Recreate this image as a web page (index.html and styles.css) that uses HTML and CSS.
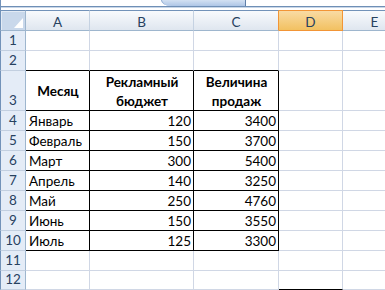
FILE: index.html
```html
<!DOCTYPE html>
<html lang="ru">
<head>
    <meta charset="UTF-8">
    <meta name="viewport" content="width=device-width, initial-scale=1.0">
    <title>Реклама и продажи</title>
    <link rel="stylesheet" href="styles.css">
</head>
<body>

<div class="sheet">
    <div class="topbar">
        <div class="namebox"><span>ООО</span></div>
        <div class="tab"></div>
    </div>

    <div class="grid">
        <div class="corner"></div>
        <div class="ch">A</div>
        <div class="ch">B</div>
        <div class="ch pre-sel">C</div>
        <div class="ch sel">D</div>
        <div class="ch">E</div>

        <div class="rh">1</div>
        <div class="c"></div><div class="c"></div><div class="c"></div><div class="c"></div><div class="c"></div>

        <div class="rh">2</div>
        <div class="c bt"></div><div class="c bt"></div><div class="c bt"></div><div class="c"></div><div class="c"></div>

        <div class="rh">3</div>
        <div class="c b th">Месяц</div>
        <div class="c b th">Рекламный бюджет</div>
        <div class="c b th">Величина продаж</div>
        <div class="c"></div><div class="c"></div>

        <div class="rh">4</div>
        <div class="c b">Январь</div><div class="c b num">120</div><div class="c b num">3400</div>
        <div class="c"></div><div class="c"></div>

        <div class="rh">5</div>
        <div class="c b">Февраль</div><div class="c b num">150</div><div class="c b num">3700</div>
        <div class="c"></div><div class="c"></div>

        <div class="rh">6</div>
        <div class="c b">Март</div><div class="c b num">300</div><div class="c b num">5400</div>
        <div class="c"></div><div class="c"></div>

        <div class="rh">7</div>
        <div class="c b">Апрель</div><div class="c b num">140</div><div class="c b num">3250</div>
        <div class="c"></div><div class="c"></div>

        <div class="rh">8</div>
        <div class="c b">Май</div><div class="c b num">250</div><div class="c b num">4760</div>
        <div class="c"></div><div class="c"></div>

        <div class="rh">9</div>
        <div class="c b">Июнь</div><div class="c b num">150</div><div class="c b num">3550</div>
        <div class="c"></div><div class="c"></div>

        <div class="rh">10</div>
        <div class="c b">Июль</div><div class="c b num">125</div><div class="c b num">3300</div>
        <div class="c"></div><div class="c"></div>

        <div class="rh">11</div>
        <div class="c"></div><div class="c"></div><div class="c"></div><div class="c"></div><div class="c"></div>

        <div class="rh">12</div>
        <div class="c"></div><div class="c"></div><div class="c"></div><div class="c bb"></div><div class="c"></div>
    </div>
</div>

</body>
</html>
```

FILE: styles.css
```css
body {
    margin: 0;
    background: white;
    font-family: Lato, "Liberation Sans", sans-serif;
}
.sheet {
    width: 385px;
    height: 290px;
    overflow: hidden;
}

/* formula bar edge and sheet tab above the grid */
.topbar {
    position: relative;
    height: 10px;
    border-left: 1px solid #7292b9;
    background: linear-gradient(to bottom, #fff 6px, #6f8fb6 6px, #6f8fb6 7px, #c9d7e8 7px, #c9d7e8 8px, #fff 8px);
}
.namebox {
    position: absolute;
    left: 59px;
    top: 0;
    height: 2px;
    overflow: hidden;
}
.namebox span {
    display: block;
    margin-top: -11px;
    font-size: 13px;
    font-weight: bold;
    line-height: 13px;
    color: #222;
    letter-spacing: 1px;
}
.tab {
    position: absolute;
    left: 160px;
    top: 0;
    width: 83px;
    height: 6px;
    border-left: 1px solid #8aa8d0;
    border-right: 1px solid #5f7fa8;
    border-bottom-left-radius: 10px 6px;
    background: linear-gradient(#d3e1f2, #aec6e6);
}

.grid {
    display: grid;
    width: 407px;
    grid-template-columns: 26px 64px 104px 85px 64px 64px;
    grid-template-rows: 21px 20px 20px 40px repeat(8, 20px) 19px;
    font-size: 13.5px;
    color: #000;
}
.grid > div {
    box-sizing: border-box;
    display: flex;
}

/* column and row headers */
.corner {
    position: relative;
    border-top: 1px solid #7292b9;
    border-left: 1px solid #7292b9;
    border-right: 1px solid #9eb6ce;
    border-bottom: 1px solid #9eb6ce;
    background: #c9d8eb;
    box-shadow: inset 1px 1px 0 #e3ebf5;
}
.corner::after {
    content: "";
    position: absolute;
    right: 2px;
    bottom: 2px;
    width: 9px;
    height: 10px;
    background: #fff;
    clip-path: polygon(100% 0, 100% 100%, 0 100%);
}
.ch {
    justify-content: center;
    align-items: center;
    padding-top: 2px;
    border-top: 1px solid #7292b9;
    border-right: 1px solid #c5d2e2;
    border-bottom: 1px solid #9eb6ce;
    background: linear-gradient(#f8fafd, #dfe6ef);
    color: #27415f;
    font-size: 13.5px;
}
.ch.pre-sel {
    border-right-color: #f29536;
}
.ch.sel {
    border-top-color: #f29536;
    border-right-color: #f29536;
    border-bottom-color: #f29536;
    background: linear-gradient(#f9dba4, #f2c161);
}
.rh {
    justify-content: center;
    align-items: flex-end;
    padding-bottom: 2px;
    border-left: 1px solid #7292b9;
    border-right: 1px solid #9eb6ce;
    border-bottom: 1px solid #c2cfe0;
    background: #e4ecf7;
    color: #27415f;
    font-size: 13.5px;
}

/* worksheet cells */
.c {
    align-items: center;
    padding: 1px 2px 0 3px;
    border-right: 1px solid #d0d7e5;
    border-bottom: 1px solid #d0d7e5;
    white-space: nowrap;
}
.c.b {
    border-right-color: #000;
    border-bottom-color: #000;
}
.c.bt,
.c.bb {
    border-bottom-color: #000;
}
.c.num {
    justify-content: flex-end;
    padding-right: 2px;
}
.c.th {
    justify-content: center;
    text-align: center;
    white-space: normal;
    font-weight: bold;
    line-height: 19px;
    padding-top: 2px;
}
```
